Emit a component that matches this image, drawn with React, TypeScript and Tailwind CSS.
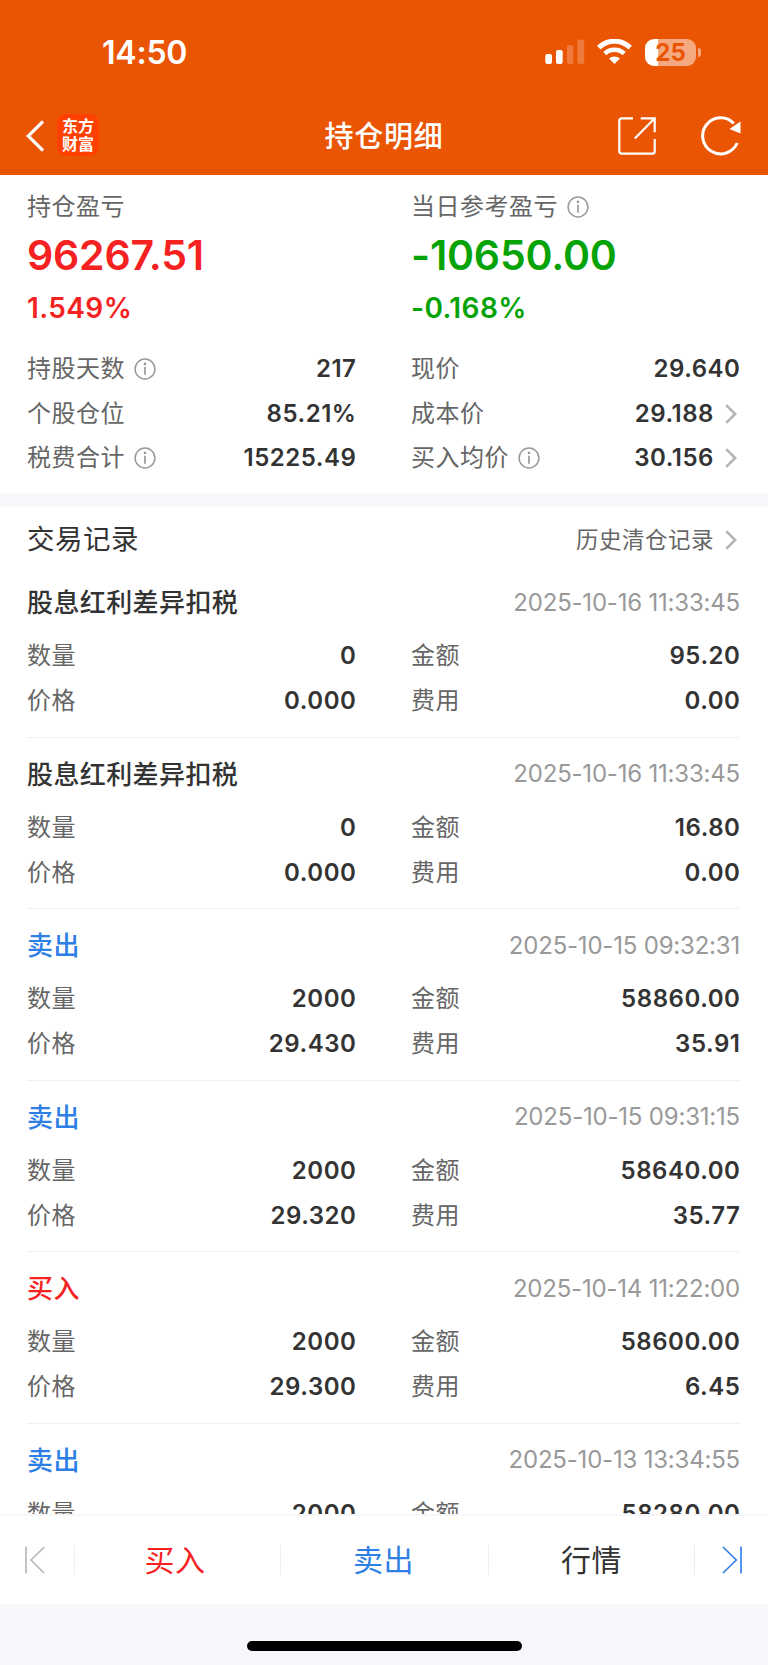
import type { ReactNode } from "react";
import { clsx } from "clsx";

type Trade = {
  title: string;
  side?: "buy" | "sell";
  time: string;
  quantity: string;
  amount: string;
  price: string;
  fee: string;
};

const trades: Trade[] = [
  { title: "股息红利差异扣税", time: "2025-10-16 11:33:45", quantity: "0", amount: "95.20", price: "0.000", fee: "0.00" },
  { title: "股息红利差异扣税", time: "2025-10-16 11:33:45", quantity: "0", amount: "16.80", price: "0.000", fee: "0.00" },
  { title: "卖出", side: "sell", time: "2025-10-15 09:32:31", quantity: "2000", amount: "58860.00", price: "29.430", fee: "35.91" },
  { title: "卖出", side: "sell", time: "2025-10-15 09:31:15", quantity: "2000", amount: "58640.00", price: "29.320", fee: "35.77" },
  { title: "买入", side: "buy", time: "2025-10-14 11:22:00", quantity: "2000", amount: "58600.00", price: "29.300", fee: "6.45" },
  { title: "卖出", side: "sell", time: "2025-10-13 13:34:55", quantity: "2000", amount: "58280.00", price: "29.140", fee: "35.55" },
];

function InfoIcon() {
  return (
    <svg width="22" height="22" viewBox="0 0 22 22" fill="none" className="ml-[9px] shrink-0">
      <circle cx="11" cy="11" r="9.9" stroke="#999" strokeWidth="1.5" />
      <circle cx="11" cy="5.9" r="1.3" fill="#999" />
      <path d="M11 8.8v8" stroke="#999" strokeWidth="1.7" />
    </svg>
  );
}

function ChevronRight() {
  return (
    <svg width="12" height="20" viewBox="0 0 12 20" fill="none" className="ml-[11px] mr-[3px] shrink-0">
      <path d="M1.2 1.2 10.2 10l-9 8.8" stroke="#b3b3b3" strokeWidth="2.5" />
    </svg>
  );
}

function Field({ label, value, info, link }: { label: string; value: string; info?: boolean; link?: boolean }) {
  return (
    <div className="flex h-[44.6px] items-center">
      <span className="text-[24px] tracking-[0.5px] text-[#666]">{label}</span>
      {info && <InfoIcon />}
      <span className={clsx("ml-auto text-[24px] font-semibold tracking-[0.55px] text-[#333]", !link && "-mr-[0.5px]")}>
        {value}
      </span>
      {link && <ChevronRight />}
    </div>
  );
}

function StatusBar() {
  return (
    <div className="flex h-[97px] items-center pt-[7px] pl-[102px] pr-[67px] text-white">
      <span className="pt-[2px] text-[32px] font-semibold leading-none tracking-[-0.2px]">14:50</span>
      <svg width="40" height="26" viewBox="0 0 40 26" fill="#fff" className="ml-auto">
        <rect x="0.3" y="15" width="6.7" height="10" rx="2" />
        <rect x="11" y="11" width="6.7" height="14" rx="2" />
        <rect x="22" y="6" width="6.3" height="19" rx="2" opacity="0.22" />
        <rect x="32.5" y="0.5" width="6.7" height="24.5" rx="2" opacity="0.22" />
      </svg>
      <svg width="35" height="26" viewBox="0 0 35 26" fill="none" className="ml-[12px]">
        <path d="M1.8 8.6a22.5 22.5 0 0 1 31.4 0" stroke="#fff" strokeWidth="5" />
        <path d="M7.8 14.6a14.2 14.2 0 0 1 19.4 0" stroke="#fff" strokeWidth="4.6" />
        <path d="M17.5 25 12 19.6a8 8 0 0 1 11 0z" fill="#fff" />
      </svg>
      <div className="ml-[13px] flex items-center">
        <div className="flex h-[27px] w-[51px] items-center justify-center rounded-[9px] bg-[linear-gradient(to_right,#fff_13px,#f5a981_13px)] pt-[1px] text-[24px] font-bold leading-none text-[#ea5504]">
          25
        </div>
        <div className="ml-[2px] h-[9px] w-[3px] rounded-r-full bg-[#f5a981]" />
      </div>
    </div>
  );
}

function NavBar() {
  return (
    <div className="flex h-[77.5px] items-center pl-[26px] pr-[27px] text-white">
      <div className="flex flex-1 items-center">
        <svg width="18" height="32" viewBox="0 0 18 32" fill="none">
          <path d="M17 1.5 2.2 16 17 30.5" stroke="#fff" strokeWidth="3.2" />
        </svg>
        <div className="ml-[13px] -mt-[2px] flex h-[42px] w-[42px] flex-col items-center justify-center rounded-[9px] bg-[#ff4000] text-[16px] font-bold leading-[18px]">
          <span>东方</span>
          <span>财富</span>
        </div>
      </div>
      <h1 className="pt-[2px] pl-[1px] text-[29px] font-medium tracking-[0.7px]">持仓明细</h1>
      <div className="flex flex-1 items-center justify-end">
        <svg width="38" height="38" viewBox="0 0 38 38" fill="none" stroke="#fff" strokeWidth="2.2">
          <path d="M15 1.3H3.5a2.2 2.2 0 0 0-2.2 2.2v31a2.2 2.2 0 0 0 2.2 2.2h31a2.2 2.2 0 0 0 2.2-2.2V22" />
          <path d="M22.7 1.3h14v14M36 2 16.8 21.5" />
        </svg>
        <svg width="40" height="40" viewBox="0 0 40 40" fill="none" className="ml-[45px]">
          <path d="M36.2 27a18 18 0 1 1-3.4-19.5" stroke="#fff" strokeWidth="3" />
          <path d="M39.5 5.5v12L28.5 13z" fill="#fff" />
        </svg>
      </div>
    </div>
  );
}

function ProfitBlock({ label, value, percent, color, info }: {
  label: string;
  value: string;
  percent: string;
  color: string;
  info?: boolean;
}) {
  return (
    <div className="h-[158.5px]">
      <div className="flex h-[37px] items-center text-[24px] tracking-[0.5px] text-[#666]">
        {label}
        {info && <InfoIcon />}
      </div>
      <div className={clsx("-mt-[2px] text-[41px] font-semibold leading-[62px] tracking-[-0.2px]", color)}>{value}</div>
      <div className={clsx("mt-[1px] text-[28px] font-semibold leading-[42px] tracking-[0.4px]", color)}>{percent}</div>
    </div>
  );
}

function Summary() {
  return (
    <section className="grid grid-cols-2 pt-[14px] pb-[12px]">
      <div className="pl-[27px] pr-[28px]">
        <ProfitBlock label="持仓盈亏" value="96267.51" percent="1.549%" color="text-[#f62222]" />
        <Field label="持股天数" value="217" info />
        <Field label="个股仓位" value="85.21%" />
        <Field label="税费合计" value="15225.49" info />
      </div>
      <div className="pl-[27px] pr-[28px]">
        <ProfitBlock label="当日参考盈亏" value="-10650.00" percent="-0.168%" color="text-[#05a305]" info />
        <Field label="现价" value="29.640" />
        <Field label="成本价" value="29.188" link />
        <Field label="买入均价" value="30.156" info link />
      </div>
    </section>
  );
}

function TradeItem({ trade }: { trade: Trade }) {
  return (
    <li className="ml-[27px] mr-[28px] h-[171.5px] border-b border-[#f0f0f0] pt-[9.5px]">
      <div className="flex h-[54px] items-center justify-between">
        <span
          className={clsx(
            "text-[26px] font-medium tracking-[0.4px]",
            trade.side === "buy" && "text-[#f62222]",
            trade.side === "sell" && "text-[#2e7fe5]",
            !trade.side && "text-[#333]",
          )}
        >
          {trade.title}
        </span>
        <span className="text-[24px] tracking-[-0.2px] text-[#999]">{trade.time}</span>
      </div>
      <div className="mt-[4.4px] grid grid-cols-2 gap-x-[55px]">
        <Field label="数量" value={trade.quantity} />
        <Field label="金额" value={trade.amount} />
        <Field label="价格" value={trade.price} />
        <Field label="费用" value={trade.fee} />
      </div>
    </li>
  );
}

function FooterTab({ className, children }: { className: string; children: ReactNode }) {
  return (
    <button className={clsx("h-[30px] border-l border-[#eee] text-[30px] leading-[28px] tracking-[0.5px]", className)}>
      {children}
    </button>
  );
}

export default function App() {
  return (
    <div className="flex h-[1665px] w-[768px] flex-col overflow-hidden bg-white font-[Inter,'Noto_Sans_CJK_SC',sans-serif]">
      <header className="h-[174.5px] shrink-0 bg-[#ea5504]">
        <StatusBar />
        <NavBar />
      </header>
      <main className="min-h-0 flex-1 overflow-hidden">
        <Summary />
        <div className="h-[14px] bg-[#f6f7fa]" />
        <div className="flex h-[59.5px] items-center justify-between pl-[27px] pr-[28px] pt-[7px]">
          <h2 className="text-[27.5px] tracking-[0.5px] text-[#333]">交易记录</h2>
          <div className="flex items-center text-[22.5px] tracking-[0.5px] text-[#666]">
            历史清仓记录
            <ChevronRight />
          </div>
        </div>
        <ul>
          {trades.map((trade, i) => (
            <TradeItem key={i} trade={trade} />
          ))}
        </ul>
      </main>
      <nav className="flex h-[90px] shrink-0 items-center border-t-2 border-[#f7f7f7]">
        <svg width="74" height="28" viewBox="0 0 74 28" fill="none" stroke="#b5b5b5" strokeWidth="1.6">
          <path d="M26 0.5v27M44.3 1 31 14l13 13" />
        </svg>
        <FooterTab className="w-[206px] pr-[5px] text-[#f62222]">买入</FooterTab>
        <FooterTab className="w-[208px] pr-[2px] text-[#2e7fe5]">卖出</FooterTab>
        <FooterTab className="w-[207px] border-r text-[#333]">行情</FooterTab>
        <svg width="73" height="28" viewBox="0 0 73 28" fill="none" stroke="#2e7fe5" strokeWidth="1.6">
          <path d="M28 1l13.3 13L28 27M46 0.5v27" />
        </svg>
      </nav>
      <div className="flex h-[61px] shrink-0 justify-center bg-[#f6f7fa] pt-[37px]">
        <div className="h-[9.5px] w-[275px] rounded-full bg-black" />
      </div>
    </div>
  );
}
